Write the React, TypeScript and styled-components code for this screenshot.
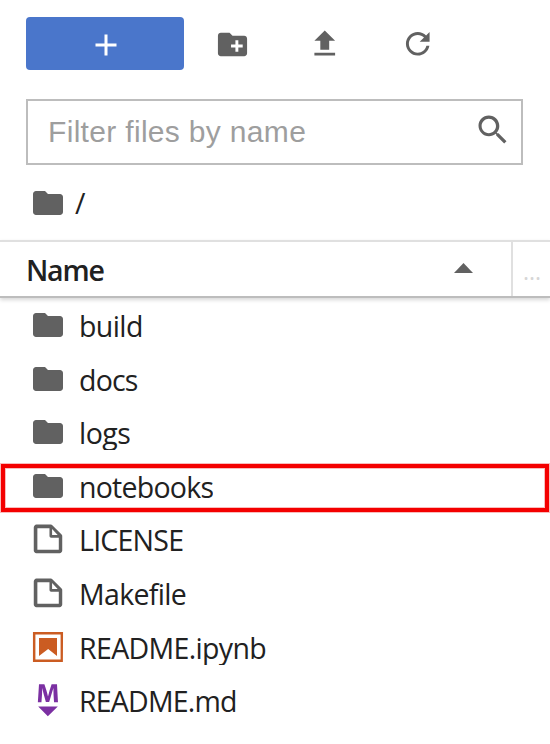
import React from 'react';
import styled, { createGlobalStyle } from 'styled-components';

const GlobalStyle = createGlobalStyle`
  * { box-sizing: border-box; }
  body { margin: 0; background: #fff; overflow: hidden; }
`;

const Browser = styled.div`
  display: flex;
  flex-direction: column;
  width: 550px;
  height: 744px;
  background: #fff;
  color: #212121;
  font-family: 'Open Sans', 'Noto Sans', sans-serif;
  font-size: 28.5px;
  font-weight: 380;
`;

const Toolbar = styled.div`
  display: flex;
  align-items: center;
  height: 53px;
  margin: 17px 26px 0;
`;

const NewButton = styled.button`
  display: flex;
  align-items: center;
  justify-content: center;
  width: 158px;
  height: 53px;
  margin-right: 30px;
  padding: 2px 0 0 1px;
  border: 0;
  border-radius: 4px;
  background: #4a76cb;
`;

const ToolButton = styled.button`
  display: flex;
  align-items: center;
  justify-content: center;
  width: 37px;
  height: 53px;
  margin-right: 55.4px;
  padding: 1.4px 0 0;
  border: 0;
  background: none;
`;

const Glyph = styled.svg<{ $color?: string; $size?: number }>`
  display: block;
  flex: none;
  width: ${(p) => p.$size ?? 36}px;
  height: ${(p) => p.$size ?? 36}px;
  fill: ${(p) => p.$color ?? '#616161'};
`;

const FilterBox = styled.label`
  display: flex;
  align-items: center;
  justify-content: space-between;
  width: 497px;
  height: 66px;
  margin: 29px 0 0 26px;
  padding: 0 11px 5px 20px;
  border: 2px solid #bdbdbd;
`;

const FilterInput = styled.input`
  width: 400px;
  padding: 5px 0 0;
  border: 0;
  outline: 0;
  background: none;
  font: 30px 'Liberation Sans', Arial, sans-serif;
  letter-spacing: 0.32px;
  &::placeholder { color: #9e9e9e; opacity: 1; }
`;

const Crumbs = styled.nav`
  display: flex;
  align-items: center;
  height: 36px;
  margin: 19.5px 0 19.5px 30px;
  gap: 9px;
`;

const Header = styled.div`
  display: flex;
  flex: none;
  height: 58px;
  border-top: 2px solid #e0e0e0;
  border-bottom: 2px solid #bdbdbd;
  box-shadow: 0 2px 4px rgba(0, 0, 0, 0.16);
`;

const NameColumn = styled.div`
  display: flex;
  align-items: center;
  justify-content: space-between;
  width: 511px;
  padding: 2px 38px 0 26px;
  font-weight: 600;
  letter-spacing: -1.2px;
`;

const Caret = styled.svg`
  display: block;
  width: 19px;
  height: 10px;
  margin-bottom: 5px;
  fill: #616161;
`;

const MoreColumn = styled.div`
  flex: 1;
  padding: 11px 0 0 10px;
  border-left: 2px solid #e0e0e0;
  color: #d6d6d6;
  font-size: 23px;
  line-height: 36px;
`;

const Listing = styled.ul`
  margin: 9px 0 0;
  padding: 0;
  list-style: none;
`;

const Row = styled.li`
  position: relative;
  display: flex;
  height: 53.6px;
  padding-left: 30px;
  gap: 12px;
`;

const Label = styled.span<{ $spacing: number }>`
  height: 36px;
  padding-left: 1px;
  overflow: hidden;
  line-height: 38px;
  white-space: pre;
  letter-spacing: ${(p) => p.$spacing}px;
`;

const Highlight = styled.div`
  position: absolute;
  top: -3.8px;
  left: 1px;
  width: 548px;
  height: 48px;
  border: 4px solid #f40000;
  box-shadow: 0 0 0 1px #f9bcbc, inset 0 0 0 1px #f9bcbc;
`;

const FOLDER = 'M10 4H4c-1.1 0-1.99.9-1.99 2L2 18c0 1.1.9 2 2 2h16c1.1 0 2-.9 2-2V8c0-1.1-.9-2-2-2h-8l-2-2z';
const FILE =
  'M19.3 8.2l-5.5-5.5c-.3-.3-.7-.5-1.2-.5H3.9c-.8.1-1.6.9-1.6 1.8v14.1c0 .9.7 1.6 1.6 1.6h14.2c.9 0 1.6-.7 1.6-1.6V9.4c.1-.5-.1-.9-.4-1.2zm-5.8-3.3l3.4 3.6h-3.4V4.9zm3.9 12.7H4.7c-.1 0-.2 0-.2-.2V4.7c0-.2.1-.3.2-.3h7.2v4.4s0 .8.3 1.1c.3.3 1.1.3 1.1.3h4.3v7.2s-.1.2-.2.2z';

type Kind = 'folder' | 'file' | 'notebook' | 'markdown';

function KindIcon({ kind }: { kind: Kind }) {
  switch (kind) {
    case 'folder':
      return <Glyph viewBox="0 0 24 24"><path d={FOLDER} /></Glyph>;
    case 'file':
      return <Glyph viewBox="0 0 22 22"><path d={FILE} /></Glyph>;
    case 'notebook':
      return (
        <Glyph viewBox="0 0 22 22" $color="#cb5c22">
          <path d="M18.7 3.3v15.4H3.3V3.3h15.4m1.5-1.5H1.8v18.3h18.3l.1-18.3z" />
          <path d="M16.5 16.5l-5.4-4.3-5.6 4.3v-11h11z" />
        </Glyph>
      );
    case 'markdown':
      return (
        <Glyph viewBox="0 0 22 22" $color="#7b30a2">
          <path d="M5 14.9h12l-6.1 6zm9.4-6.8c0-1.3-.1-2.9-.1-4.5-.4 1.4-.9 2.9-1.3 4.3l-1.3 4.3h-2L8.5 7.9c-.4-1.3-.7-2.9-1-4.3-.1 1.6-.1 3.2-.2 4.6L7 12.4H4.8l.7-11h3.3L10 5c.4 1.2.7 2.7 1 3.9.3-1.2.7-2.6 1-3.9l1.2-3.7h3.3l.6 11h-2.4l-.3-4.2z" />
        </Glyph>
      );
  }
}

const entries: { name: string; kind: Kind; spacing: number; selected?: boolean }[] = [
  { name: 'build', kind: 'folder', spacing: -0.6 },
  { name: 'docs', kind: 'folder', spacing: -0.8 },
  { name: 'logs', kind: 'folder', spacing: -0.5 },
  { name: 'notebooks', kind: 'folder', spacing: -0.75, selected: true },
  { name: 'LICENSE', kind: 'file', spacing: -0.75 },
  { name: 'Makefile', kind: 'file', spacing: -0.65 },
  { name: 'README.ipynb', kind: 'notebook', spacing: -0.65 },
  { name: 'README.md', kind: 'markdown', spacing: -0.8 },
];

export default function App() {
  return (
    <>
      <GlobalStyle />
      <Browser>
        <Toolbar>
          <NewButton aria-label="New Launcher">
            <Glyph viewBox="0 0 24 24" $color="#fff"><path d="M19 13h-6v6h-2v-6H5v-2h6V5h2v6h6v2z" /></Glyph>
          </NewButton>
          <ToolButton aria-label="New Folder">
            <Glyph viewBox="0 0 24 24" $size={35}>
              <path d="M20 6h-8l-2-2H4c-1.11 0-1.99.89-1.99 2L2 18c0 1.11.89 2 2 2h16c1.11 0 2-.89 2-2V8c0-1.11-.89-2-2-2zm-1 8h-3v3h-2v-3h-3v-2h3V9h2v3h3v2z" />
            </Glyph>
          </ToolButton>
          <ToolButton aria-label="Upload Files">
            <Glyph viewBox="0 0 24 24" $size={35.5}><path d="M5 18h14v2H5zM9 16h6v-6h4l-7-7-7 7h4z" /></Glyph>
          </ToolButton>
          <ToolButton aria-label="Refresh">
            <Glyph viewBox="0 0 18 18" $size={35.5}>
              <path d="M9 13.5c-2.49 0-4.5-2.01-4.5-4.5S6.51 4.5 9 4.5c1.24 0 2.36.52 3.17 1.33L10 8h5V3l-1.76 1.76C12.15 3.68 10.66 3 9 3 5.69 3 3.01 5.69 3.01 9S5.69 15 9 15c2.97 0 5.43-2.16 5.9-5h-1.52c-.46 2-2.24 3.5-4.38 3.5z" />
            </Glyph>
          </ToolButton>
        </Toolbar>
        <FilterBox>
          <FilterInput placeholder="Filter files by name" />
          <Glyph viewBox="0 0 18 18" $size={35}>
            <path d="M12.1,10.9h-0.7l-0.2-0.2c0.8-0.9,1.3-2.2,1.3-3.5c0-3-2.4-5.4-5.4-5.4S1.8,4.2,1.8,7.1s2.4,5.4,5.4,5.4c1.3,0,2.5-0.5,3.5-1.3l0.2,0.2v0.7l4.1,4.1l1.2-1.2L12.1,10.9z M7.1,10.9c-2.1,0-3.7-1.7-3.7-3.7s1.7-3.7,3.7-3.7s3.7,1.7,3.7,3.7S9.2,10.9,7.1,10.9z" />
          </Glyph>
        </FilterBox>
        <Crumbs>
          <KindIcon kind="folder" />
          <span>/</span>
        </Crumbs>
        <Header>
          <NameColumn>
            Name
            <Caret viewBox="0 0 19 10"><path d="M0 10L9.5 0L19 10z" /></Caret>
          </NameColumn>
          <MoreColumn>...</MoreColumn>
        </Header>
        <Listing>
          {entries.map((e) => (
            <Row key={e.name}>
              <KindIcon kind={e.kind} />
              <Label $spacing={e.spacing}>{e.name}</Label>
              {e.selected && <Highlight />}
            </Row>
          ))}
        </Listing>
      </Browser>
    </>
  );
}
